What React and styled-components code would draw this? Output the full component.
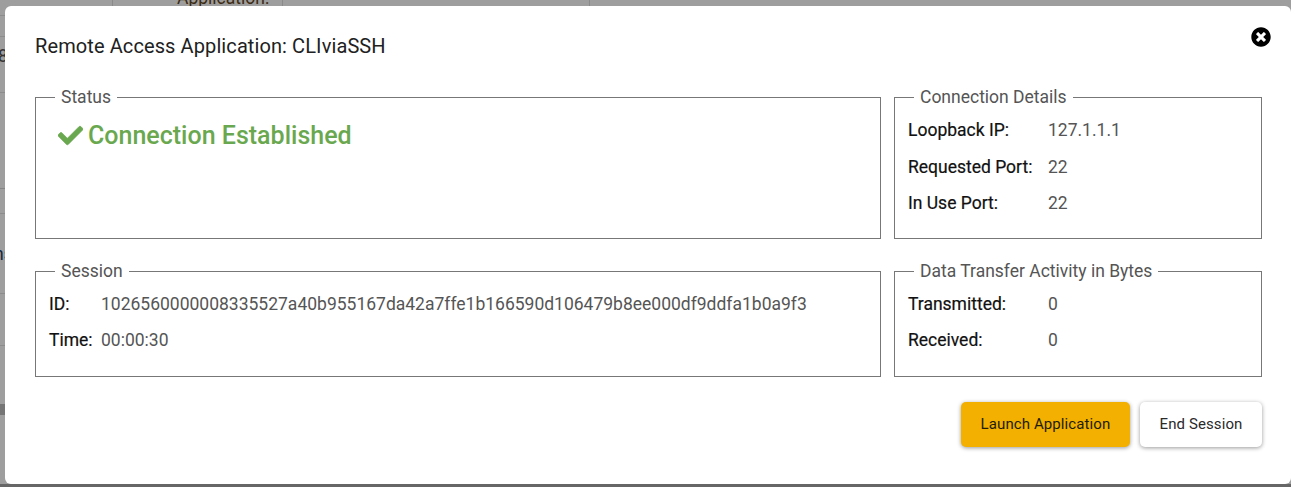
import React from "react";
import styled, { createGlobalStyle } from "styled-components";
import { FaCheck, FaTimesCircle } from "react-icons/fa";

const Global = createGlobalStyle`
  html, body { margin: 0; padding: 0; width: 1291px; height: 487px; overflow: hidden; background: #9e9e9e; }
  body { font-family: Roboto, "Liberation Sans", sans-serif; }
`;

const Page = styled.div`
  position: relative;
  width: 1291px;
  height: 487px;
  overflow: hidden;
  background: #9e9e9e;
`;

const BackdropRule = styled.div`
  position: absolute;
  left: 0;
  width: 6px;
  top: ${(p) => p.$y}px;
  height: ${(p) => p.$h || 1}px;
  background: ${(p) => p.$c || "#8c8c8c"};
`;

const BackdropDivider = styled.div`
  position: absolute;
  top: 0;
  height: 6px;
  width: 1px;
  left: ${(p) => p.$x}px;
  background: #8a8a8a;
`;

const BackdropText = styled.div`
  position: absolute;
  font-size: 17.5px;
  line-height: 18px;
  white-space: nowrap;
  color: ${(p) => p.$c};
  left: ${(p) => p.$x}px;
  top: ${(p) => p.$y}px;
`;

const BottomEdge = styled.div`
  position: absolute;
  left: 0;
  right: 0;
  bottom: 0;
  height: 3px;
  background: #666;
`;

const Modal = styled.section`
  position: absolute;
  left: 5px;
  top: 6px;
  width: 1286px;
  height: 478px;
  box-sizing: border-box;
  padding: 29px 29px 0 30px;
  background: #fff;
  border-radius: 6px;
`;

const Title = styled.h2`
  margin: 0;
  font-size: 20px;
  font-weight: 400;
  line-height: 22px;
  color: #212121;
  letter-spacing: 0.1px;
`;

const Close = styled.button`
  position: absolute;
  top: 21px;
  right: 20px;
  padding: 0;
  border: 0;
  background: none;
  display: flex;
  color: #000;
  font-size: 20px;
`;

const Panels = styled.div`
  display: grid;
  grid-template-columns: 846px 368px;
  grid-template-rows: 151px 115px;
  column-gap: 13px;
  row-gap: 23px;
  margin-top: 31px;
`;

const Panel = styled.fieldset`
  margin: 0;
  min-width: 0;
  box-sizing: border-box;
  padding: 0 13px;
  border: 1px solid #777;
  position: relative;
`;

const PanelLegend = styled.legend`
  margin-left: 6px;
  padding: 0 6px;
  font-size: 17.5px;
  line-height: 19px;
  color: #555;
  height: 18px;
`;

const StatusLine = styled.div`
  display: flex;
  align-items: center;
  gap: 5px;
  margin: 15px 0 0 9px;
  font-size: 25px;
  font-weight: 500;
  line-height: 30px;
  color: #6aa84f;
`;

const StatusIcon = styled(FaCheck)`
  font-size: 25px;
  margin-top: -2px;
  stroke: #6aa84f;
  stroke-width: 12px;
`;

const InfoGrid = styled.dl`
  display: grid;
  grid-template-columns: ${(p) => p.$label}px 1fr;
  grid-auto-rows: ${(p) => p.$row}px;
  align-items: center;
  margin: 6px 0 0;
  font-size: 17.5px;
`;

const InfoLabel = styled.dt`
  color: #111;
  -webkit-text-stroke: 0.2px #111;
`;

const InfoValue = styled.dd`
  margin: 0;
  color: #555;
`;

const Actions = styled.div`
  display: flex;
  justify-content: flex-end;
  gap: 10px;
  margin-top: 25px;
`;

const ActionButton = styled.button`
  height: 45px;
  width: ${(p) => p.$w}px;
  padding: 0 0 2px;
  border: 0;
  border-radius: 5px;
  font-family: inherit;
  font-size: 15px;
  font-weight: 400;
  letter-spacing: 0.1px;
  color: ${(p) => (p.$primary ? "#221c04" : "#2a2a2a")};
  background: ${(p) => (p.$primary ? "#f4b000" : "#fff")};
  box-shadow: 0 1px 4px rgba(0, 0, 0, 0.4);
`;

export default function App() {
  return (
    <Page>
      <Global />
      <BackdropRule $y={15} />
      <BackdropRule $y={36} />
      <BackdropRule $y={92} />
      <BackdropRule $y={188} $c="#858585" />
      <BackdropRule $y={213} />
      <BackdropRule $y={293} />
      <BackdropRule $y={345} />
      <BackdropRule $y={404} $h={11} $c="#757575" />
      <BackdropDivider $x={112} />
      <BackdropDivider $x={282} />
      <BackdropDivider $x={589} />
      <BackdropText $x={177} $y={-11} $c="#3d2b12">Application:</BackdropText>
      <BackdropText $x={-2} $y={47} $c="#333">8</BackdropText>
      <BackdropText $x={-6} $y={245} $c="#12283f">ns</BackdropText>
      <BottomEdge />
      <Modal>
        <Title>Remote Access Application: CLIviaSSH</Title>
        <Close aria-label="Close"><FaTimesCircle /></Close>
        <Panels>
          <Panel>
            <PanelLegend>Status</PanelLegend>
            <StatusLine><StatusIcon />Connection Established</StatusLine>
          </Panel>
          <Panel>
            <PanelLegend>Connection Details</PanelLegend>
            <InfoGrid $label={140} $row={36.5}>
              <InfoLabel>Loopback IP:</InfoLabel><InfoValue>127.1.1.1</InfoValue>
              <InfoLabel>Requested Port:</InfoLabel><InfoValue>22</InfoValue>
              <InfoLabel>In Use Port:</InfoLabel><InfoValue>22</InfoValue>
            </InfoGrid>
          </Panel>
          <Panel>
            <PanelLegend>Session</PanelLegend>
            <InfoGrid $label={52} $row={36}>
              <InfoLabel>ID:</InfoLabel><InfoValue>1026560000008335527a40b955167da42a7ffe1b166590d106479b8ee000df9ddfa1b0a9f3</InfoValue>
              <InfoLabel>Time:</InfoLabel><InfoValue>00:00:30</InfoValue>
            </InfoGrid>
          </Panel>
          <Panel>
            <PanelLegend>Data Transfer Activity in Bytes</PanelLegend>
            <InfoGrid $label={140} $row={36}>
              <InfoLabel>Transmitted:</InfoLabel><InfoValue>0</InfoValue>
              <InfoLabel>Received:</InfoLabel><InfoValue>0</InfoValue>
            </InfoGrid>
          </Panel>
        </Panels>
        <Actions>
          <ActionButton $primary $w={169}>Launch Application</ActionButton>
          <ActionButton $w={122}>End Session</ActionButton>
        </Actions>
      </Modal>
    </Page>
  );
}
